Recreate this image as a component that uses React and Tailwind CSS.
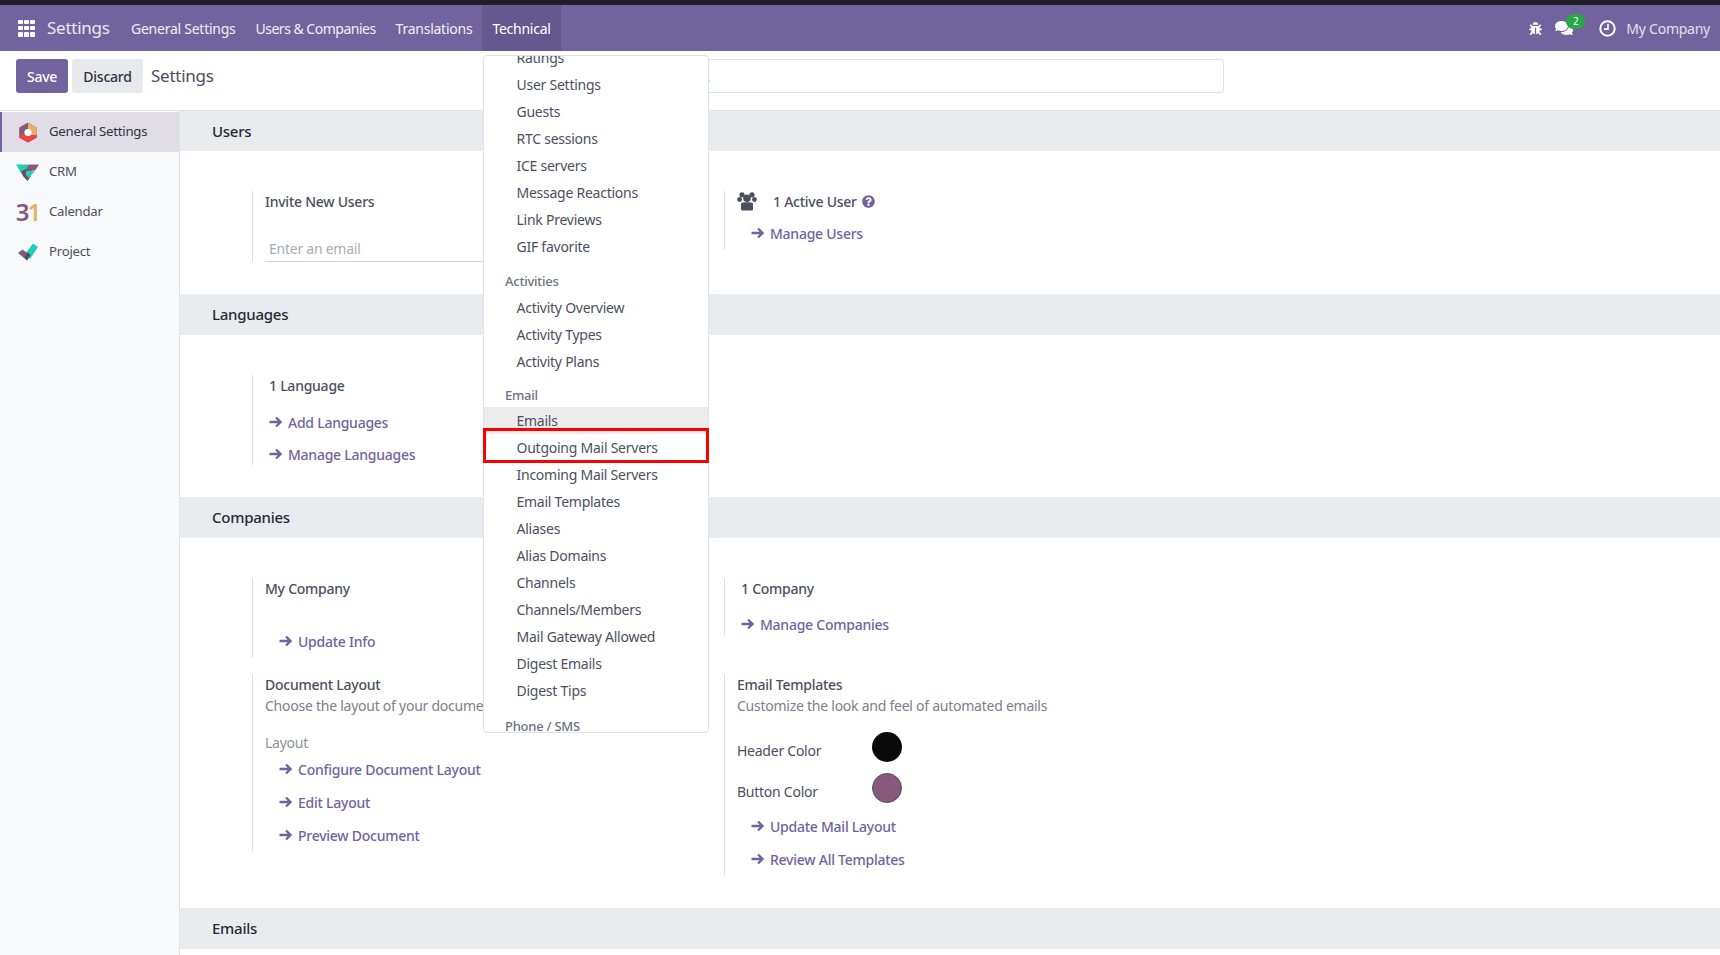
import React from "react";
import { FaBug, FaComments, FaQuestionCircle } from "react-icons/fa";

const Arrow = () => (
  <svg width="13" height="12" viewBox="0 0 13 12" fill="none" stroke="#71639e" strokeWidth="2.3" className="shrink-0">
    <path d="M0.5 6H11.5M7 1.5L11.5 6L7 10.5" />
  </svg>
);

const LinkRow = ({ children, className = "" }) => (
  <div className={`flex items-center h-[22px] gap-[6px] text-[#71639e] font-medium ${className}`}>
    <Arrow />
    <span className="whitespace-nowrap">{children}</span>
  </div>
);

const Box = ({ className = "", children }) => (
  <div className={`border-l border-[#dee2e6] whitespace-nowrap ${className}`}>{children}</div>
);

const Bar = ({ title, className = "h-[41px]" }) => (
  <div className={`${className} bg-[#e9ecef] flex items-center pl-[32px] text-[#262a33] font-medium text-[15px]`}>{title}</div>
);

const Section = ({ title, children, className = "", barClass }) => (
  <section>
    <Bar title={title} className={barClass} />
    <div className={`pl-[72px] pt-[40px] grid grid-cols-[472px_472px] items-start content-start ${className}`}>{children}</div>
  </section>
);

const GeneralIcon = () => (
  <svg width="20" height="21" viewBox="0 0 20 21">
    <path d="M10 0.5L18.8 5.5V15.5L10 20.5L1.2 15.5V5.5Z" fill="#875a7b" />
    <path d="M10 0.5L18.8 5.5V13H13V9L10 7Z" fill="#e4b067" />
    <path d="M1.2 13H18.8V15.5L10 20.5L1.2 15.5Z" fill="#ef4444" />
    <circle cx="10" cy="10.5" r="3.6" fill="#fff" />
  </svg>
);

const CrmIcon = () => (
  <svg width="23" height="17" viewBox="0 0 23 17">
    <path d="M0 0.5H13L16 7L11.5 17L5 9Z" fill="#1fd1b8" />
    <path d="M13 0.5H23L19.5 6L15 7L8.5 7.5Z" fill="#875a7b" />
    <path d="M5 7.5L9.5 5L12 9L15 12L11.5 17L7 12Z" fill="#6e4d68" />
    <path d="M10 7L15 7.5L19.5 6L13 14L10 11Z" fill="#1fd1b8" />
  </svg>
);

const ProjectIcon = () => (
  <svg width="20" height="18" viewBox="0 0 20 18">
    <path d="M7 11L15 0.5L20 4L12 16Z" fill="#1fd1b8" />
    <path d="M0 10L4.5 6.5L12 12L9 17.5Z" fill="#875a7b" />
    <path d="M6.5 14L10 9.5L12.5 12L9 17.5Z" fill="#4a4f60" />
  </svg>
);

const UsersIcon = () => (
  <svg width="20" height="19" viewBox="0 0 20 19" fill="#4b4f5e" className="shrink-0">
    <circle cx="5" cy="2.8" r="2.6" />
    <circle cx="15" cy="2.8" r="2.6" />
    <circle cx="2.6" cy="7.5" r="2.4" />
    <circle cx="17.4" cy="7.5" r="2.4" />
    <circle cx="10" cy="6.3" r="3.8" />
    <path d="M4 11.5C5 10.5 7 10.3 10 10.3S15 10.5 16 11.5V17C16 18 15.3 18.6 14 18.6H6C4.7 18.6 4 18 4 17Z" />
  </svg>
);

const ClockIcon = () => (
  <svg width="17" height="17" viewBox="0 0 17 17" fill="none" stroke="#fff" strokeWidth="2">
    <circle cx="8.5" cy="8.5" r="7.2" />
    <path d="M9 4V9.2H5" strokeWidth="1.7" />
  </svg>
);

const Grid9 = () => (
  <div className="grid grid-cols-3 gap-[1.5px] w-[17px] h-[17px]">
    {Array.from({ length: 9 }).map((_, i) => (
      <span key={i} className="bg-white rounded-[1px] w-[4.7px] h-[4.7px]" />
    ))}
  </div>
);

const SideItem = ({ icon, label, active }) => (
  <div className={`h-[40px] flex items-center text-[13.2px] ${active ? "bg-[#e0dde7] border-l-2 border-[#71639e] text-[#2f3340]" : "border-l-2 border-transparent"}`}>
    <span className="w-[47px] flex justify-center pl-[4px] shrink-0">{icon}</span>
    <span>{label}</span>
  </div>
);

const MenuItem = ({ children, active }) => (
  <div className={`h-[27px] shrink-0 flex items-center pl-[32.5px] ${active ? "bg-[#ececec]" : ""}`}>{children}</div>
);

const MenuHead = ({ children, className = "" }) => (
  <div className={`h-[22px] shrink-0 flex items-center pl-[21px] text-[#6c7280] text-[13px] font-medium ${className}`}>{children}</div>
);

export default function App() {
  return (
    <div className="w-[1720px] h-[955px] overflow-hidden relative bg-white flex flex-col text-[14px] text-[#4b4f5e] font-['Noto_Sans',sans-serif] tracking-[-0.25px]">
      <div className="h-[5px] bg-[#1e1e28] shrink-0" />
      <header className="h-[46px] shrink-0 bg-[#71639e] flex items-center text-white/90">
        <div className="w-[47px] pl-[18px]"><Grid9 /></div>
        <div className="text-[17px] w-[74px] text-white/85">Settings</div>
        <nav className="flex items-stretch h-full text-[14px]">
          <div className="flex items-center px-[10px]">General Settings</div>
          <div className="flex items-center px-[10px] tracking-[-0.5px]">Users &amp; Companies</div>
          <div className="flex items-center px-[10px]">Translations</div>
          <div className="flex items-center px-[10px] bg-[#65588f] text-white">Technical</div>
        </nav>
        <div className="ml-auto flex items-center pr-[10px]">
          <FaBug className="text-white text-[13px] mr-[13px]" />
          <div className="relative mr-[26px]">
            <FaComments className="text-white text-[18px]" />
            <span className="absolute -top-[5px] left-[11px] w-[19px] h-[15px] rounded-full bg-[#28a745] text-white text-[10px] flex items-center justify-center">2</span>
          </div>
          <ClockIcon />
          <span className="ml-[10px] text-[14px] text-white/80">My Company</span>
        </div>
      </header>

      <div className="h-[60px] shrink-0 border-b border-[#dee2e6] flex items-center pl-[16px] pb-[9px]">
        <button className="w-[52px] h-[34px] rounded-[3px] bg-[#71639e] text-white font-medium">Save</button>
        <button className="w-[71px] h-[34px] ml-[4px] rounded-[3px] bg-[#e7e9ed] text-[#2f3340] font-medium">Discard</button>
        <span className="ml-[8px] text-[17px] text-[#4b4f5e]">Settings</span>
        <div className="ml-auto mr-[496px] w-[650px] h-[34px] border border-[#dee2e6] rounded-[3px] pl-[82px] flex items-center text-[#a9adb5]">Search...</div>
      </div>

      <div className="flex-1 flex min-h-0">
        <aside className="w-[180px] shrink-0 bg-[#f8f9fa] border-r border-[#dee2e6] pt-[1px]">
          <SideItem active icon={<GeneralIcon />} label="General Settings" />
          <SideItem icon={<CrmIcon />} label="CRM" />
          <SideItem
            icon={
              <span className="font-semibold text-[24px] leading-none flex tracking-[-2px]">
                <span className="text-[#875a7b]">3</span>
                <span className="text-[#e4b067]">1</span>
              </span>
            }
            label="Calendar"
          />
          <SideItem icon={<ProjectIcon />} label="Project" />
        </aside>

        <main className="flex-1 min-w-0 overflow-hidden">
          <Section title="Users" barClass="h-[40px]" className="h-[143px]">
            <Box className="h-[71px] pl-[12px]">
              <div className="h-[22px] leading-[22px] font-medium">Invite New Users</div>
              <div className="mt-[24px] h-[25px] leading-[24px] border-b border-[#ced4da] text-[#a9adb5] pl-[4px] w-[300px]">Enter an email</div>
            </Box>
            <Box className="h-[59px] pl-[12px]">
              <div className="flex items-center h-[21px] font-medium">
                <UsersIcon />
                <span className="ml-[16px]">1 Active User</span>
                <FaQuestionCircle className="ml-[5px] text-[#71639e] text-[13px]" />
              </div>
              <div className="mt-[10px] pl-[14px]"><LinkRow>Manage Users</LinkRow></div>
            </Box>
          </Section>

          <Section title="Languages" className="h-[162px]">
            <Box className="h-[90px] pl-[16px]">
              <div className="h-[22px] leading-[22px] font-medium">1 Language</div>
              <LinkRow className="mt-[14px]">Add Languages</LinkRow>
              <LinkRow className="mt-[10px]">Manage Languages</LinkRow>
            </Box>
          </Section>

          <Section title="Companies" className="h-[370px] gap-y-[16px]">
            <Box className="h-[80px] pl-[12px]">
              <div className="h-[22px] leading-[22px] font-medium">My Company</div>
              <div className="mt-[30px] pl-[14px]"><LinkRow>Update Info</LinkRow></div>
            </Box>
            <Box className="h-[58px] pl-[16px]">
              <div className="h-[22px] leading-[22px] font-medium">1 Company</div>
              <LinkRow className="mt-[13px]">Manage Companies</LinkRow>
            </Box>
            <Box className="h-[178px] pl-[12px]">
              <div className="h-[22px] leading-[22px] font-medium">Document Layout</div>
              <div className="h-[20px] leading-[20px] text-[#7c808a]">Choose the layout of your documents</div>
              <div className="mt-[16px] h-[22px] leading-[22px] text-[#8d9199]">Layout</div>
              <div className="mt-[4px] pl-[14px]">
                <LinkRow>Configure Document Layout</LinkRow>
                <LinkRow className="mt-[11px]">Edit Layout</LinkRow>
                <LinkRow className="mt-[11px]">Preview Document</LinkRow>
              </div>
            </Box>
            <Box className="h-[202px] pl-[12px]">
              <div className="h-[22px] leading-[22px] font-medium">Email Templates</div>
              <div className="h-[20px] leading-[20px] text-[#7c808a]">Customize the look and feel of automated emails</div>
              <div className="mt-[16px] h-[30px] flex items-center w-[165px] justify-between">
                <span className="pt-[7px]">Header Color</span>
                <span className="w-[30px] h-[30px] rounded-full bg-[#0a0a0a]" />
              </div>
              <div className="mt-[11px] h-[30px] flex items-center w-[165px] justify-between">
                <span className="pt-[7px]">Button Color</span>
                <span className="w-[30px] h-[30px] rounded-full bg-[#875a7b] border border-[#4b4f5e]" />
              </div>
              <div className="mt-[12px] pl-[14px]">
                <LinkRow>Update Mail Layout</LinkRow>
                <LinkRow className="mt-[11px]">Review All Templates</LinkRow>
              </div>
            </Box>
          </Section>

          <section>
            <Bar title="Emails" />
          </section>
        </main>
      </div>

      <div className="absolute left-[483px] top-[55px] w-[226px] h-[678px] bg-white border border-[#dee2e6] rounded-[4px] overflow-hidden">
        <div className="flex flex-col -mt-[12px]">
          <MenuItem>Ratings</MenuItem>
          <MenuItem>User Settings</MenuItem>
          <MenuItem>Guests</MenuItem>
          <MenuItem>RTC sessions</MenuItem>
          <MenuItem>ICE servers</MenuItem>
          <MenuItem>Message Reactions</MenuItem>
          <MenuItem>Link Previews</MenuItem>
          <MenuItem>GIF favorite</MenuItem>
          <MenuHead className="mt-[11px] mb-[1px]">Activities</MenuHead>
          <MenuItem>Activity Overview</MenuItem>
          <MenuItem>Activity Types</MenuItem>
          <MenuItem>Activity Plans</MenuItem>
          <MenuHead className="mt-[10px]">Email</MenuHead>
          <MenuItem active>Emails</MenuItem>
          <MenuItem>Outgoing Mail Servers</MenuItem>
          <MenuItem>Incoming Mail Servers</MenuItem>
          <MenuItem>Email Templates</MenuItem>
          <MenuItem>Aliases</MenuItem>
          <MenuItem>Alias Domains</MenuItem>
          <MenuItem>Channels</MenuItem>
          <MenuItem>Channels/Members</MenuItem>
          <MenuItem>Mail Gateway Allowed</MenuItem>
          <MenuItem>Digest Emails</MenuItem>
          <MenuItem>Digest Tips</MenuItem>
          <MenuHead className="mt-[12px]">Phone / SMS</MenuHead>
        </div>
      </div>
      <div className="absolute left-[483px] top-[428px] w-[226px] h-[35px] border-[3px] border-[#ff0000]" />
    </div>
  );
}
